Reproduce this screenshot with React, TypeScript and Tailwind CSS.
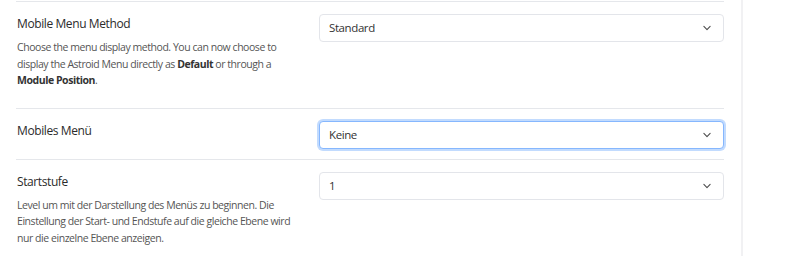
import React from "react";

function Chevron() {
  return (
    <svg width="10" height="10" viewBox="0 0 16 16" fill="none" className="shrink-0">
      <path d="M3 5.5l5 5 5-5" stroke="#4a4a4a" strokeWidth="1.7" strokeLinecap="round" strokeLinejoin="round" />
    </svg>
  );
}

function Select({ value, focus }: { value: string; focus?: boolean }) {
  return (
    <div
      className={
        "flex h-[28px] w-[405px] items-center justify-between rounded-[4px] bg-white pl-[9px] pr-[11px] text-[11.5px] tracking-[-0.4px] text-[#333] " +
        (focus
          ? "border border-[#86b7fe] shadow-[0_0_0_2px_rgba(13,110,253,0.25)]"
          : "border border-[#e3e5ea]")
      }
    >
      <span>{value}</span>
      <Chevron />
    </div>
  );
}

function Row({
  label,
  value,
  focus,
  desc,
  pb,
}: {
  label: string;
  value: string;
  focus?: boolean;
  desc?: React.ReactNode;
  pb: string;
}) {
  return (
    <div className={"flex justify-between border-t border-[#e5e7eb] pt-[12px] " + pb}>
      <div className="w-[290px] pl-[1px]">
        <div className="text-[12px] leading-[20px] tracking-[-0.4px] text-[#2b2b2b]">{label}</div>
        {desc && (
          <div className="mt-[5px] text-[10.5px] leading-[16.5px] tracking-[-0.45px] text-[#555]">{desc}</div>
        )}
      </div>
      <Select value={value} focus={focus} />
    </div>
  );
}

export default function App() {
  return (
    <div
      className="flex h-[256px] w-[800px] overflow-hidden bg-white"
      style={{ fontFamily: '"Open Sans", "Noto Sans", sans-serif' }}
    >
      <div className="w-[741px] pl-[16px] pr-[17px] pt-[1px]">
        <Row
          label="Mobile Menu Method"
          value="Standard"
          pb="pb-[19px]"
          desc={
            <>
              Choose the menu display method. You can now choose to display the Astroid Menu directly as{" "}
              <b className="font-bold text-[#333]">Default</b> or through a{" "}
              <b className="font-bold text-[#333]">Module Position</b>.
            </>
          }
        />
        <Row label="Mobiles Menü" value="Keine" focus pb="pb-[10px]" />
        <Row
          label="Startstufe"
          value="1"
          pb="pb-[10px]"
          desc={
            <>
              Level um mit der Darstellung des Menüs zu beginnen. Die Einstellung der Start- und Endstufe auf die
              gleiche Ebene wird nur die einzelne Ebene anzeigen.
            </>
          }
        />
      </div>
      <div className="h-full w-[2px] bg-[#f1f1f3]" />
      <div className="flex-1 bg-white" />
    </div>
  );
}
